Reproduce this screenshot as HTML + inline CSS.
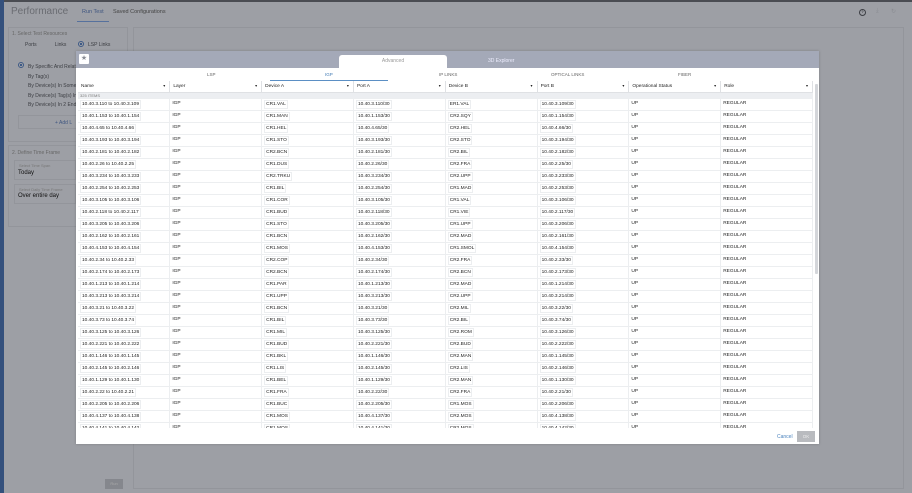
<!DOCTYPE html>
<html><head><meta charset="utf-8">
<style>
*{box-sizing:border-box;margin:0;padding:0}
body{width:912px;height:493px;overflow:hidden;background:#9d9fa5;font-family:"Liberation Sans",sans-serif;position:relative;color:#2a2c30}
.a{position:absolute}
.bar{left:0;top:0;width:4px;height:493px;background:#34507c}
.top{left:0;top:0;width:912px;height:2px;background:#4a4c52}
.t{font-size:5px;color:#3b3d42}
.panel{border:1px solid #93959b}
.modal{left:76px;top:51px;width:743px;height:393px;background:#fff;box-shadow:0 0 3px rgba(0,0,0,.2)}
.mh{left:0;top:0;width:743px;height:17px;background:#a4a9b8}
table{border-collapse:collapse;table-layout:fixed;position:absolute;left:2px;top:30px;width:735px;font-size:4.8px;color:#222}
td{height:12px;border-right:1px solid #eceef0;border-bottom:1px solid #eceef0;padding:0 2px;vertical-align:middle;white-space:nowrap;overflow:hidden}
td b{font-weight:normal;border:1px solid #eceef0;padding:1px 1px}
td.u{vertical-align:top;padding-top:2px}
th{height:11px;font-weight:normal;text-align:left;padding:0 3px;border-right:1px solid #dfe1e4;border-bottom:1px solid #dfe1e4;font-size:4.8px;position:relative}
th:after{content:"\25BE";position:absolute;right:4px;top:2px;font-size:4px}
tr.g td{height:6px;background:#eceef1;color:#777;font-size:4px}
</style></head><body>
<div class="a top"></div>
<div class="a bar"></div>
<div class="a" style="left:11px;top:6px;font-size:10px;color:#6a6c72">Performance</div>
<div class="a" style="left:82px;top:9px;font-size:5.5px;color:#3f5680">Run Test</div>
<div class="a" style="left:77px;top:21px;width:32px;height:1px;background:#56719d"></div>
<div class="a" style="left:113px;top:9px;font-size:5.5px;color:#444">Saved Configurations</div>
<div class="a" style="left:859px;top:9px;width:7px;height:7px;border:1.3px solid #3c3e44;border-radius:50%;font-size:4px;line-height:4.5px;text-align:center;font-weight:bold;color:#3c3e44">?</div>
<div class="a" style="left:876px;top:8px;font-size:6px;color:#8a8c92">⤓</div>
<div class="a" style="left:891px;top:8px;font-size:6px;color:#8a8c92">↻</div>
<div class="a panel" style="left:8px;top:27px;width:120px;height:115px"></div>
<div class="a panel" style="left:8px;top:145px;width:120px;height:82px"></div>
<div class="a panel" style="left:133px;top:27px;width:771px;height:462px"></div>
<div class="a t" style="left:12px;top:31px;color:#666">1. Select Test Resources</div>
<div class="a t" style="left:25px;top:42px">Ports &nbsp; &nbsp; &nbsp; &nbsp; &nbsp; &nbsp; Links</div>
<div class="a" style="left:78px;top:41px;width:6px;height:6px;border:1px solid #3e5a86;border-radius:50%;background:radial-gradient(#3e5a86 40%,transparent 45%)"></div>
<div class="a t" style="left:88px;top:42px">LSP Links</div>
<div class="a" style="left:18px;top:62px;width:6px;height:6px;border:1px solid #3e5a86;border-radius:50%;background:radial-gradient(#3e5a86 40%,transparent 45%)"></div>
<div class="a t" style="left:28px;top:63px;line-height:9.5px">By Specific And Relat<br>By Tag(s)<br>By Device(s) In Some<br>By Device(s) Tag(s) In<br>By Device(s) In 2 Endp</div>
<div class="a panel" style="left:18px;top:115px;width:60px;height:14px"></div>
<div class="a t" style="left:55px;top:120px;color:#3f5680">+ Add L</div>
<div class="a t" style="left:12px;top:150px;color:#666">2. Define Time Frame</div>
<div class="a panel" style="left:14px;top:160px;width:62px;height:20px"></div>
<div class="a" style="left:19px;top:163px;font-size:4px;color:#777">Select Time Span</div>
<div class="a" style="left:18px;top:170px;font-size:6px;color:#111">Today</div>
<div class="a panel" style="left:14px;top:184px;width:62px;height:20px"></div>
<div class="a" style="left:19px;top:187px;font-size:4px;color:#777">Select Daily Time Frame</div>
<div class="a" style="left:18px;top:193px;font-size:6px;color:#111">Over entire day</div>
<div class="a" style="left:105px;top:479px;width:18px;height:10px;background:#85878d;font-size:4px;color:#aaa;text-align:center;line-height:10px">Run</div>

<div class="a modal">
 <div class="a mh"></div>
 <div class="a" style="left:3px;top:3px;width:10px;height:10px;background:#fff;border-radius:1px;font-size:7px;color:#8a8d96;text-align:center;line-height:10px">★</div>
 <div class="a" style="left:263px;top:4px;width:108px;height:13px;background:#fff;border-radius:3px 3px 0 0;font-size:5px;color:#999;text-align:center;line-height:12px">Advanced</div>
 <div class="a" style="left:412px;top:7px;font-size:5px;color:#eef">3D Explorer</div>
 <div class="a" style="left:131px;top:21px;font-size:4.5px;color:#666">LSP</div>
 <div class="a" style="left:249px;top:21px;font-size:4.5px;color:#3e78b3">IGP</div>
 <div class="a" style="left:194px;top:29px;width:118px;height:1px;background:#5b8fc4"></div>
 <div class="a" style="left:363px;top:21px;font-size:4.5px;color:#666">IP LINKS</div>
 <div class="a" style="left:475px;top:21px;font-size:4.5px;color:#666">OPTICAL LINKS</div>
 <div class="a" style="left:602px;top:21px;font-size:4.5px;color:#666">FIBER</div>
 <div class="a" style="left:739px;top:33px;width:3px;height:190px;background:#d4d6da;border-radius:1px"></div>
 <div class="a" style="left:0;top:30px;width:743px;height:347px;overflow:hidden">
 <table style="top:0">
 <tr><th>Name</th><th>Layer</th><th>Device A</th><th>Port A</th><th>Device B</th><th>Port B</th><th>Operational Status</th><th>Role</th></tr>
 <tr class="g"><td colspan="8">325 ITEMS</td></tr>
 <tr><td><b>10.40.3.110 to 10.40.3.109</b></td><td class="u">IGP</td><td><b>CR1.VAL</b></td><td><b>10.40.3.110/30</b></td><td><b>ER1.VAL</b></td><td><b>10.40.3.109/30</b></td><td class="u">UP</td><td class="u">REGULAR</td></tr>
 <tr><td><b>10.40.1.153 to 10.40.1.154</b></td><td class="u">IGP</td><td><b>CR1.MAN</b></td><td><b>10.40.1.153/30</b></td><td><b>CR2.SQY</b></td><td><b>10.40.1.154/30</b></td><td class="u">UP</td><td class="u">REGULAR</td></tr>
 <tr><td><b>10.40.4.65 to 10.40.4.66</b></td><td class="u">IGP</td><td><b>CR1.HEL</b></td><td><b>10.40.4.65/30</b></td><td><b>CR2.HEL</b></td><td><b>10.40.4.66/30</b></td><td class="u">UP</td><td class="u">REGULAR</td></tr>
 <tr><td><b>10.40.3.193 to 10.40.3.194</b></td><td class="u">IGP</td><td><b>CR1.STO</b></td><td><b>10.40.3.193/30</b></td><td><b>CR2.STO</b></td><td><b>10.40.3.194/30</b></td><td class="u">UP</td><td class="u">REGULAR</td></tr>
 <tr><td><b>10.40.2.181 to 10.40.2.182</b></td><td class="u">IGP</td><td><b>CR2.BCN</b></td><td><b>10.40.2.181/30</b></td><td><b>CR2.BIL</b></td><td><b>10.40.2.182/30</b></td><td class="u">UP</td><td class="u">REGULAR</td></tr>
 <tr><td><b>10.40.2.26 to 10.40.2.25</b></td><td class="u">IGP</td><td><b>CR1.DUS</b></td><td><b>10.40.2.26/30</b></td><td><b>CR2.FRA</b></td><td><b>10.40.2.25/30</b></td><td class="u">UP</td><td class="u">REGULAR</td></tr>
 <tr><td><b>10.40.3.234 to 10.40.3.233</b></td><td class="u">IGP</td><td><b>CR2.TRKU</b></td><td><b>10.40.3.234/30</b></td><td><b>CR2.UPP</b></td><td><b>10.40.3.233/30</b></td><td class="u">UP</td><td class="u">REGULAR</td></tr>
 <tr><td><b>10.40.2.254 to 10.40.2.253</b></td><td class="u">IGP</td><td><b>CR1.BIL</b></td><td><b>10.40.2.254/30</b></td><td><b>CR1.MAD</b></td><td><b>10.40.2.253/30</b></td><td class="u">UP</td><td class="u">REGULAR</td></tr>
 <tr><td><b>10.40.3.105 to 10.40.3.106</b></td><td class="u">IGP</td><td><b>CR1.COR</b></td><td><b>10.40.3.105/30</b></td><td><b>CR1.VAL</b></td><td><b>10.40.3.106/30</b></td><td class="u">UP</td><td class="u">REGULAR</td></tr>
 <tr><td><b>10.40.2.118 to 10.40.2.117</b></td><td class="u">IGP</td><td><b>CR1.BUD</b></td><td><b>10.40.2.118/30</b></td><td><b>CR1.VIE</b></td><td><b>10.40.2.117/30</b></td><td class="u">UP</td><td class="u">REGULAR</td></tr>
 <tr><td><b>10.40.3.205 to 10.40.3.206</b></td><td class="u">IGP</td><td><b>CR1.STO</b></td><td><b>10.40.3.205/30</b></td><td><b>CR1.UPP</b></td><td><b>10.40.3.206/30</b></td><td class="u">UP</td><td class="u">REGULAR</td></tr>
 <tr><td><b>10.40.2.162 to 10.40.2.161</b></td><td class="u">IGP</td><td><b>CR1.BCN</b></td><td><b>10.40.2.162/30</b></td><td><b>CR2.MAD</b></td><td><b>10.40.2.161/30</b></td><td class="u">UP</td><td class="u">REGULAR</td></tr>
 <tr><td><b>10.40.4.153 to 10.40.4.154</b></td><td class="u">IGP</td><td><b>CR1.MOS</b></td><td><b>10.40.4.153/30</b></td><td><b>CR1.SMOL</b></td><td><b>10.40.4.154/30</b></td><td class="u">UP</td><td class="u">REGULAR</td></tr>
 <tr><td><b>10.40.2.34 to 10.40.2.33</b></td><td class="u">IGP</td><td><b>CR2.COP</b></td><td><b>10.40.2.34/30</b></td><td><b>CR2.FRA</b></td><td><b>10.40.2.33/30</b></td><td class="u">UP</td><td class="u">REGULAR</td></tr>
 <tr><td><b>10.40.2.174 to 10.40.2.173</b></td><td class="u">IGP</td><td><b>CR2.BCN</b></td><td><b>10.40.2.174/30</b></td><td><b>CR2.BCN</b></td><td><b>10.40.2.173/30</b></td><td class="u">UP</td><td class="u">REGULAR</td></tr>
 <tr><td><b>10.40.1.213 to 10.40.1.214</b></td><td class="u">IGP</td><td><b>CR1.PAR</b></td><td><b>10.40.1.213/30</b></td><td><b>CR2.MAD</b></td><td><b>10.40.1.214/30</b></td><td class="u">UP</td><td class="u">REGULAR</td></tr>
 <tr><td><b>10.40.3.213 to 10.40.3.214</b></td><td class="u">IGP</td><td><b>CR1.UPP</b></td><td><b>10.40.3.213/30</b></td><td><b>CR2.UPP</b></td><td><b>10.40.3.214/30</b></td><td class="u">UP</td><td class="u">REGULAR</td></tr>
 <tr><td><b>10.40.3.21 to 10.40.3.22</b></td><td class="u">IGP</td><td><b>CR1.BCN</b></td><td><b>10.40.3.21/30</b></td><td><b>CR2.MIL</b></td><td><b>10.40.3.22/30</b></td><td class="u">UP</td><td class="u">REGULAR</td></tr>
 <tr><td><b>10.40.3.73 to 10.40.3.74</b></td><td class="u">IGP</td><td><b>CR1.BIL</b></td><td><b>10.40.3.73/30</b></td><td><b>CR2.BIL</b></td><td><b>10.40.3.74/30</b></td><td class="u">UP</td><td class="u">REGULAR</td></tr>
 <tr><td><b>10.40.3.125 to 10.40.3.126</b></td><td class="u">IGP</td><td><b>CR1.MIL</b></td><td><b>10.40.3.125/30</b></td><td><b>CR2.ROM</b></td><td><b>10.40.3.126/30</b></td><td class="u">UP</td><td class="u">REGULAR</td></tr>
 <tr><td><b>10.40.2.221 to 10.40.2.222</b></td><td class="u">IGP</td><td><b>CR1.BUD</b></td><td><b>10.40.2.221/30</b></td><td><b>CR2.BUD</b></td><td><b>10.40.2.222/30</b></td><td class="u">UP</td><td class="u">REGULAR</td></tr>
 <tr><td><b>10.40.1.146 to 10.40.1.145</b></td><td class="u">IGP</td><td><b>CR1.BKL</b></td><td><b>10.40.1.146/30</b></td><td><b>CR2.MAN</b></td><td><b>10.40.1.145/30</b></td><td class="u">UP</td><td class="u">REGULAR</td></tr>
 <tr><td><b>10.40.2.145 to 10.40.2.146</b></td><td class="u">IGP</td><td><b>CR1.LIS</b></td><td><b>10.40.2.145/30</b></td><td><b>CR2.LIS</b></td><td><b>10.40.2.146/30</b></td><td class="u">UP</td><td class="u">REGULAR</td></tr>
 <tr><td><b>10.40.1.129 to 10.40.1.130</b></td><td class="u">IGP</td><td><b>CR1.BEL</b></td><td><b>10.40.1.129/30</b></td><td><b>CR2.MAN</b></td><td><b>10.40.1.130/30</b></td><td class="u">UP</td><td class="u">REGULAR</td></tr>
 <tr><td><b>10.40.2.22 to 10.40.2.21</b></td><td class="u">IGP</td><td><b>CR1.FRA</b></td><td><b>10.40.2.22/30</b></td><td><b>CR2.FRA</b></td><td><b>10.40.2.21/30</b></td><td class="u">UP</td><td class="u">REGULAR</td></tr>
 <tr><td><b>10.40.2.205 to 10.40.2.206</b></td><td class="u">IGP</td><td><b>CR1.BUC</b></td><td><b>10.40.2.205/30</b></td><td><b>CR1.MOS</b></td><td><b>10.40.2.206/30</b></td><td class="u">UP</td><td class="u">REGULAR</td></tr>
 <tr><td><b>10.40.4.137 to 10.40.4.138</b></td><td class="u">IGP</td><td><b>CR1.MOS</b></td><td><b>10.40.4.137/30</b></td><td><b>CR2.MOS</b></td><td><b>10.40.4.138/30</b></td><td class="u">UP</td><td class="u">REGULAR</td></tr>
 <tr><td><b>10.40.4.141 to 10.40.4.142</b></td><td class="u">IGP</td><td><b>CR1.MOS</b></td><td><b>10.40.4.141/30</b></td><td><b>CR2.MOS</b></td><td><b>10.40.4.142/30</b></td><td class="u">UP</td><td class="u">REGULAR</td></tr>
 </table>
 </div>
 <div class="a" style="left:701px;top:383px;font-size:5px;color:#4a82bd">Cancel</div>
 <div class="a" style="left:721px;top:380px;width:18px;height:11px;background:#b9bbbf;font-size:4.5px;color:#eee;text-align:center;line-height:11px">OK</div>
</div>
</body></html>
